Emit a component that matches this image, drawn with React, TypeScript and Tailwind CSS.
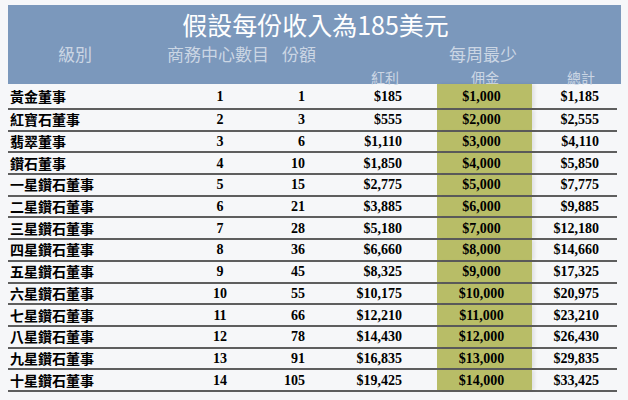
const ROWS: [string, number, number, string, string, string][] = [
  ['黃金董事', 1, 1, '$185', '$1,000', '$1,185'],
  ['紅寶石董事', 2, 3, '$555', '$2,000', '$2,555'],
  ['翡翠董事', 3, 6, '$1,110', '$3,000', '$4,110'],
  ['鑽石董事', 4, 10, '$1,850', '$4,000', '$5,850'],
  ['一星鑽石董事', 5, 15, '$2,775', '$5,000', '$7,775'],
  ['二星鑽石董事', 6, 21, '$3,885', '$6,000', '$9,885'],
  ['三星鑽石董事', 7, 28, '$5,180', '$7,000', '$12,180'],
  ['四星鑽石董事', 8, 36, '$6,660', '$8,000', '$14,660'],
  ['五星鑽石董事', 9, 45, '$8,325', '$9,000', '$17,325'],
  ['六星鑽石董事', 10, 55, '$10,175', '$10,000', '$20,975'],
  ['七星鑽石董事', 11, 66, '$12,210', '$11,000', '$23,210'],
  ['八星鑽石董事', 12, 78, '$14,430', '$12,000', '$26,430'],
  ['九星鑽石董事', 13, 91, '$16,835', '$13,000', '$29,835'],
  ['十星鑽石董事', 14, 105, '$19,425', '$14,000', '$33,425'],
]

const cjk = "font-['Noto_Sans_CJK_TC','Noto_Sans',sans-serif]"
const num = "font-['Liberation_Serif',serif] font-bold text-[14px]"

export default function App() {
  return (
    <div className="w-[628px] h-[400px] bg-[#f6f7f9] pt-[5px] pl-[8px] overflow-hidden">
      {/* Cabecera azul */}
      <div className={`w-[613px] h-[79px] bg-[#7b98bc] flex flex-col ${cjk}`}>
        <div className="pt-[4px] text-center text-white text-[25px] leading-[31px] pl-[2px]">
          假設每份收入為185美元
        </div>
        <div className="mt-[4px] flex text-[17px] leading-[20px] text-[#cbd6e4]">
          <span className="ml-[50px] w-[109px]">級別</span>
          <span className="w-[115px]">商務中心數目</span>
          <span className="w-[167px]">份額</span>
          <span>每周最少</span>
        </div>
        <div className="mt-[4px] flex text-[14px] leading-[18px] text-[#cbd6e4]">
          <span className="ml-[363px] w-[100px]">紅利</span>
          <span className="w-[96px]">佣金</span>
          <span>總計</span>
        </div>
      </div>

      {/* Filas */}
      <div className="w-[609px]">
        {ROWS.map((r, i) => (
          <div
            key={r[0]}
            className={`flex items-stretch border-b-2 border-[#5e5e5e] ${i === 0 ? 'h-[26px]' : 'h-[21.7px]'}`}
          >
            <div className={`w-[172px] pl-[2px] flex items-center text-[14px] font-bold text-black ${cjk}`}>
              {r[0]}
            </div>
            <div className={`w-[80px] flex items-center justify-center ${num}`}>{r[1]}</div>
            <div className={`w-[45px] flex items-center justify-end ${num}`}>{r[2]}</div>
            <div className={`w-[132px] flex items-center justify-end pr-[35px] ${num}`}>{r[3]}</div>
            <div className={`w-[95px] flex items-center justify-center pr-[6px] bg-[#b8bd67] shadow-[3px_0_3px_rgba(0,0,0,0.08)] ${num}`}>
              {r[4]}
            </div>
            <div className={`w-[85px] flex items-center justify-end pr-[18px] ${num}`}>{r[5]}</div>
          </div>
        ))}
      </div>
    </div>
  )
}
